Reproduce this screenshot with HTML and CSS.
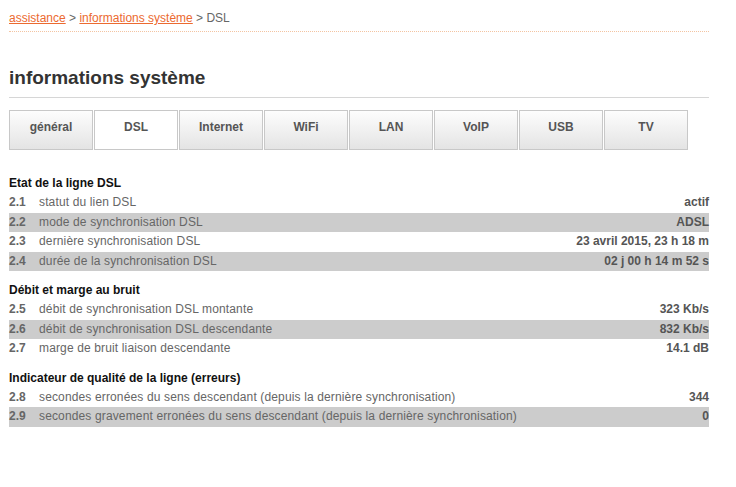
FILE: index.html
```html
<!DOCTYPE html>
<html lang="fr">
<head>
    <meta charset="UTF-8">
    <title>informations système - DSL</title>
    <link rel="stylesheet" href="styles.css">
</head>
<body>
    <div class="page">
        <div class="breadcrumb">
            <a href="#">assistance</a> &gt; <a href="#">informations système</a> &gt; DSL
        </div>

        <h1>informations système</h1>

        <ul class="tabs">
            <li><a href="#">général</a></li>
            <li class="active"><a href="#">DSL</a></li>
            <li><a href="#">Internet</a></li>
            <li><a href="#">WiFi</a></li>
            <li><a href="#">LAN</a></li>
            <li><a href="#">VoIP</a></li>
            <li><a href="#">USB</a></li>
            <li><a href="#">TV</a></li>
        </ul>

        <div class="section">
            <h2>Etat de la ligne DSL</h2>
            <div class="row"><span class="num">2.1</span><span class="label">statut du lien DSL</span><span class="value">actif</span></div>
            <div class="row odd"><span class="num">2.2</span><span class="label">mode de synchronisation DSL</span><span class="value">ADSL</span></div>
            <div class="row"><span class="num">2.3</span><span class="label">dernière synchronisation DSL</span><span class="value">23 avril 2015, 23 h 18 m</span></div>
            <div class="row odd"><span class="num">2.4</span><span class="label">durée de la synchronisation DSL</span><span class="value">02 j 00 h 14 m 52 s</span></div>
        </div>

        <div class="section">
            <h2>Débit et marge au bruit</h2>
            <div class="row"><span class="num">2.5</span><span class="label">débit de synchronisation DSL montante</span><span class="value">323 Kb/s</span></div>
            <div class="row odd"><span class="num">2.6</span><span class="label">débit de synchronisation DSL descendante</span><span class="value">832 Kb/s</span></div>
            <div class="row"><span class="num">2.7</span><span class="label">marge de bruit liaison descendante</span><span class="value">14.1 dB</span></div>
        </div>

        <div class="section">
            <h2>Indicateur de qualité de la ligne (erreurs)</h2>
            <div class="row"><span class="num">2.8</span><span class="label">secondes erronées du sens descendant (depuis la dernière synchronisation)</span><span class="value">344</span></div>
            <div class="row odd"><span class="num">2.9</span><span class="label">secondes gravement erronées du sens descendant (depuis la dernière synchronisation)</span><span class="value">0</span></div>
        </div>
    </div>
</body>
</html>
```

FILE: styles.css
```css
body {
    margin: 0;
    background: #fff;
    font-family: "Liberation Sans", Arial, sans-serif;
    font-size: 12px;
    color: #666;
}
.page {
    width: 700px;
    padding: 10px 0 0 9px;
}
.breadcrumb {
    height: 21px;
    line-height: 16px;
    border-bottom: 1px dotted #f3c4a2;
    color: #666;
}
.breadcrumb a {
    color: #ec6a30;
    text-decoration: underline;
}
h1 {
    margin: 35px 0 0 0;
    padding-bottom: 8px;
    border-bottom: 1px solid #d6d6d6;
    font-size: 19px;
    line-height: 22px;
    color: #333;
}
.tabs {
    list-style: none;
    margin: 12px 0 0 0;
    padding: 0;
    display: flex;
    gap: 1px;
}
.tabs li {
    width: 82px;
    height: 38px;
    border: 1px solid #c8c8c8;
    background: linear-gradient(#fdfdfd, #e4e4e4);
}
.tabs li.active {
    background: #fff;
}
.tabs a {
    display: block;
    text-align: center;
    line-height: 33px;
    font-weight: bold;
    color: #555;
    text-decoration: none;
}
.section {
    margin-top: 23px;
}
.section + .section {
    margin-top: 9px;
}
h2 {
    margin: 0;
    font-size: 12px;
    line-height: 20px;
    color: #111;
}
.row {
    display: flex;
    height: 19.5px;
    line-height: 19px;
}
.row.odd {
    background: #cccccc;
}
.num {
    width: 30px;
    font-weight: bold;
    color: #666;
}
.label {
    flex: 1;
    color: #666;
    letter-spacing: 0.14px;
}
.value {
    font-weight: bold;
    color: #555;
}
```
